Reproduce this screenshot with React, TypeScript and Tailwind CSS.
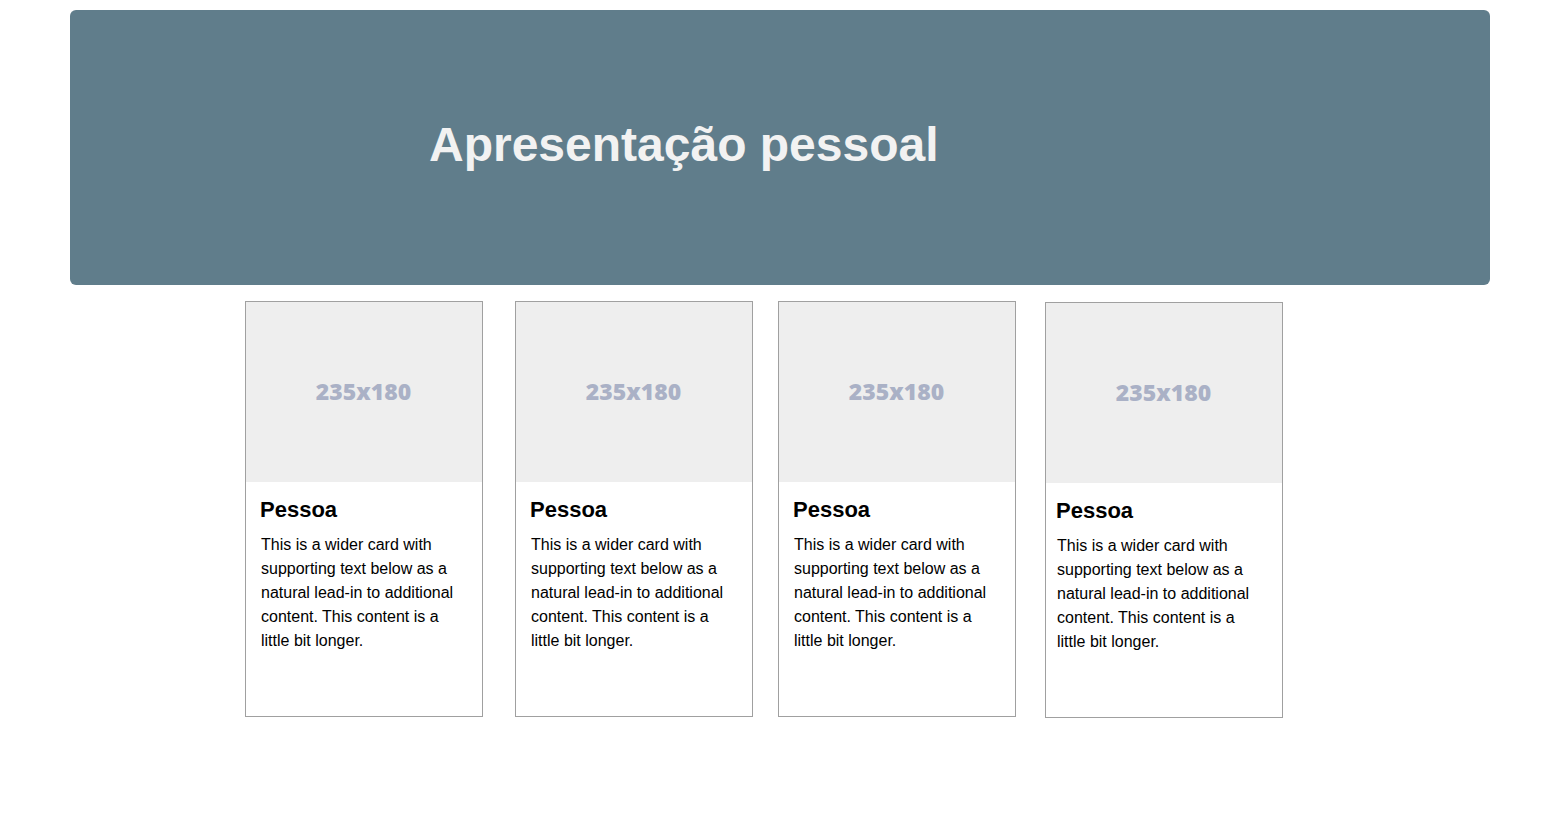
const cards = [
  { ml: 'ml-[245px]', mt: 'mt-0', pad: 'pl-[14px] pr-[14px]' },
  { ml: 'ml-[32px]', mt: 'mt-0', pad: 'pl-[14px] pr-[14px]' },
  { ml: 'ml-[25px]', mt: 'mt-0', pad: 'pl-[14px] pr-[14px]' },
  { ml: 'ml-[29px]', mt: 'mt-px', pad: 'pl-[10px] pr-[22px]' },
];

function Card({ ml, mt, pad }: { ml: string; mt: string; pad: string }) {
  return (
    <div className={`${ml} ${mt} w-[238px] h-[416px] border border-[#a0a0a0] bg-white flex flex-col`}>
      <div className="h-[180px] bg-[#eeeeee] flex items-center justify-center">
        <span className="font-['Open_Sans',sans-serif] font-extrabold text-[23px] text-[#aab1c6] leading-none -ml-px -mt-[2px]">
          235x180
        </span>
      </div>
      <div className={`${pad} pt-[15px]`}>
        <h5 className="text-[22px] font-bold leading-[25px] text-black">Pessoa</h5>
        <p className="mt-[11px] pl-px text-[16px] leading-[24px] text-black">
          This is a wider card with supporting text below as a natural lead-in to additional content. This content is a
          little bit longer.
        </p>
      </div>
    </div>
  );
}

export default function App() {
  return (
    <div className="min-h-[828px] bg-white font-['Liberation_Sans',Arial,sans-serif] pt-[10px]">
      <header className="ml-[70px] w-[1420px] h-[275px] rounded-[6px] bg-[#607d8b] pl-[359px] pt-[107px]">
        <h1 className="text-[48px] font-bold leading-[55px] text-[#f2f2f2]">Apresentação pessoal</h1>
      </header>
      <div className="flex items-start mt-[16px]">
        {cards.map((c, i) => (
          <Card key={i} {...c} />
        ))}
      </div>
    </div>
  );
}
